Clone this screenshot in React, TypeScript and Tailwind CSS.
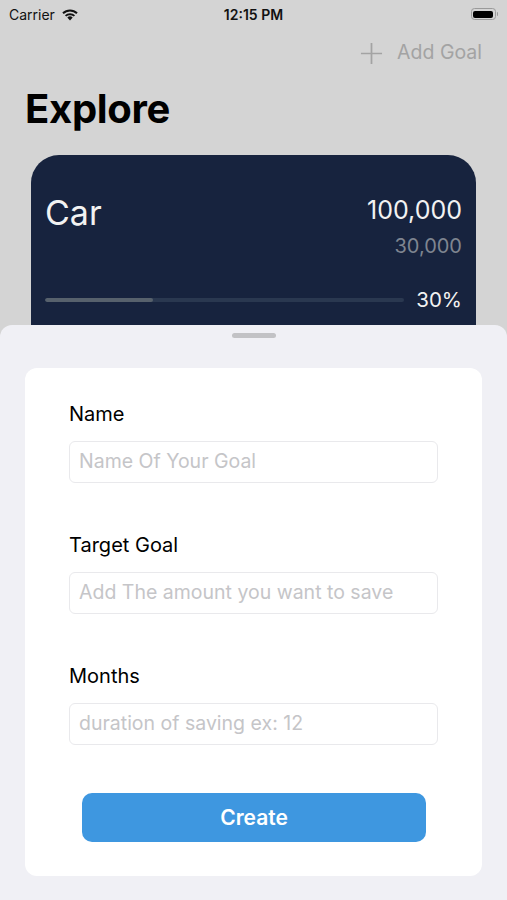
import React from "react";

function Field({ label, placeholder }: { label: string; placeholder: string }) {
  return (
    <div className="flex flex-col">
      <div className="text-[20px] leading-[24px] text-black">{label}</div>
      <div className="mt-[15px] h-[42px] rounded-[6px] border border-[#e9e9ec] flex items-center px-[9px]">
        <span className="text-[19.5px] text-[#c5c5c8] leading-none">{placeholder}</span>
      </div>
    </div>
  );
}

export default function App() {
  return (
    <div
      className="relative w-[507px] h-[900px] overflow-hidden bg-[#d4d4d4]"
      style={{ fontFamily: "Inter, 'Liberation Sans', sans-serif" }}
    >
      {/* status bar */}
      <div className="h-[28px] flex items-center justify-between px-[9px] text-[14px]">
        <div className="flex items-center gap-[6px] w-[120px]">
          <span className="text-[#111]">Carrier</span>
          <svg width="18" height="13" viewBox="0 0 18 13">
            <path d="M9 12.5 L6.3 9.6 A4 4 0 0 1 11.7 9.6 Z" fill="#111" />
            <path d="M3.9 7.2 A7.4 7.4 0 0 1 14.1 7.2 L12.7 8.6 A5.4 5.4 0 0 0 5.3 8.6 Z" fill="#111" />
            <path d="M1.3 4.6 A11 11 0 0 1 16.7 4.6 L15.3 6 A9 9 0 0 0 2.7 6 Z" fill="#111" />
          </svg>
        </div>
        <span className="font-semibold text-[#111]">12:15 PM</span>
        <div className="w-[120px] flex justify-end">
          <div className="flex items-center">
            <div className="w-[25px] h-[12px] rounded-[3.5px] border border-[#9a9a9a] p-[1.5px]">
              <div className="w-full h-full rounded-[2px] bg-black" />
            </div>
            <div className="w-[1.5px] h-[4px] bg-[#9a9a9a] rounded-r-sm ml-[1px]" />
          </div>
        </div>
      </div>

      {/* nav */}
      <div className="h-[50px] flex items-center justify-end pr-[25px] gap-[14px]">
        <svg width="23" height="23" viewBox="0 0 24 24">
          <path d="M12 1 V23 M1 12 H23" stroke="#a3a3a3" strokeWidth="1.8" />
        </svg>
        <span className="text-[19.5px] text-[#a3a3a3]">Add Goal</span>
      </div>

      <h1 className="pl-[25px] mt-[6px] text-[40px] leading-[50px] font-bold text-black tracking-[-0.3px]">Explore</h1>

      {/* goal card */}
      <div className="mx-[31px] mt-[21px] h-[220px] rounded-[28px] bg-[#17233e] px-[14px] pt-[38px]">
        <div className="flex justify-between items-start">
          <span className="text-[34px] leading-[40px] text-[#f2f2f2]">Car</span>
          <div className="flex flex-col items-end">
            <span className="text-[25px] leading-[30px] text-[#f2f2f2] mt-[2px]">100,000</span>
            <span className="text-[20px] leading-[24px] text-[#7f8590] mt-[9px]">30,000</span>
          </div>
        </div>
        <div className="flex items-center mt-[30px] gap-[12px]">
          <div className="flex-1 h-[4px] rounded-full bg-[#2a3850] overflow-hidden">
            <div className="h-full w-[30%] bg-[#57616c] rounded-full" />
          </div>
          <span className="text-[20.5px] text-[#f2f2f2] leading-[24px]">30%</span>
        </div>
      </div>

      {/* sheet */}
      <div className="absolute left-0 right-0 top-[325px] bottom-0 bg-[#f0f0f5] rounded-t-[12px]">
        <div className="flex justify-center pt-[8px]">
          <div className="w-[44px] h-[5px] rounded-full bg-[#c2c2c5]" />
        </div>
        <div className="mx-[25px] mt-[30px] h-[508px] bg-white rounded-[12px] pl-[44px] pr-[44px] pt-[34px]">
          <div className="flex flex-col gap-[50px]">
            <Field label="Name" placeholder="Name Of Your Goal" />
            <Field label="Target Goal" placeholder="Add The amount you want to save" />
            <Field label="Months" placeholder="duration of saving ex: 12" />
          </div>
          <div className="mt-[48px] pl-[13px] pr-[12px]">
            <div className="h-[49px] rounded-[10px] bg-[#3e97e0] flex items-center justify-center">
              <span className="text-white text-[21px] font-semibold">Create</span>
            </div>
          </div>
        </div>
      </div>
    </div>
  );
}
